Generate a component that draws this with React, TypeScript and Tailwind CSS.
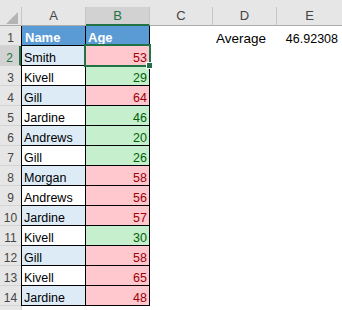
const rows: [string, number][] = [
  ["Smith", 53],
  ["Kivell", 29],
  ["Gill", 64],
  ["Jardine", 46],
  ["Andrews", 20],
  ["Gill", 26],
  ["Morgan", 58],
  ["Andrews", 56],
  ["Jardine", 57],
  ["Kivell", 30],
  ["Gill", 58],
  ["Kivell", 65],
  ["Jardine", 48],
];

const AVG = 46.92308;

export default function App() {
  return (
    <div className="w-[342px] h-[310px] overflow-hidden bg-white font-['Liberation_Sans',Arial,sans-serif] text-[12.5px] leading-[14px] text-black">
      <div className="relative">
        <div className="h-[7px] bg-[#e6e6e6]" />

        {/* column headers */}
        <div className="flex h-[19px] bg-[#e6e6e6] text-[13px] text-[#444]">
          <div className="relative w-[21px] h-full border-b border-[#ababab]">
            <svg className="absolute left-[6px] top-[5px]" width="12" height="12" viewBox="0 0 12 12">
              <path d="M12 0V12H0Z" fill="#b4b4b4" />
            </svg>
          </div>
          <div className="w-[65px] h-full flex items-center justify-center border-l border-r border-b border-[#c6c6c6] border-b-[#ababab]">A</div>
          <div className="w-[64px] h-full flex items-center justify-center bg-[#d2d2d2] border-r border-[#c6c6c6] border-b-2 border-b-[#217346] text-[#217346]">B</div>
          <div className="w-[63px] h-full flex items-center justify-center border-r border-b border-[#c6c6c6] border-b-[#ababab]">C</div>
          <div className="w-[64px] h-full flex items-center justify-center border-r border-b border-[#c6c6c6] border-b-[#ababab]">D</div>
          <div className="w-[65px] h-full flex items-center justify-center border-b border-[#ababab]">E</div>
        </div>

        {/* row 1 */}
        <div className="flex h-[20px]">
          <div className="w-[21px] flex items-end justify-center bg-[#e6e6e6] border-b border-[#d4d4d4] text-[12px] text-[#444]">1</div>
          <div className="w-[65px] flex items-end pl-[3px] bg-[#5b9bd5] border-l border-r border-b border-black font-bold text-white text-[13px]">Name</div>
          <div className="w-[64px] flex items-end pl-[2px] bg-[#5b9bd5] border-r border-b border-black font-bold text-white text-[13px]">Age</div>
          <div className="w-[63px]" />
          <div className="w-[64px] flex items-end pl-[3px] text-[13.5px]">Average</div>
          <div className="w-[65px] flex items-end justify-end pr-[4px]">46.92308</div>
        </div>

        {rows.map(([name, age], i) => {
          const r = i + 2;
          const high = age >= AVG;
          const sel = r === 2;
          return (
            <div key={r} className="flex h-[20px]">
              <div
                className={
                  sel
                    ? "w-[21px] flex items-end justify-center bg-[#d2d2d2] border-b border-r-2 border-[#d4d4d4] border-r-[#217346] text-[12px] text-[#217346]"
                    : "w-[21px] flex items-end justify-center bg-[#e6e6e6] border-b border-[#d4d4d4] text-[12px] text-[#444]"
                }
              >
                {r}
              </div>
              <div
                className={
                  r % 2 === 0
                    ? "w-[65px] flex items-end pl-[2px] bg-[#ddebf7] border-l border-r border-b border-black"
                    : "w-[65px] flex items-end pl-[2px] bg-white border-l border-r border-b border-black"
                }
              >
                {name}
              </div>
              <div
                className={
                  high
                    ? "w-[64px] flex items-end justify-end pr-[2px] bg-[#ffc7ce] text-[#9c0006] border-r border-b border-black"
                    : "w-[64px] flex items-end justify-end pr-[2px] bg-[#c6efce] text-[#006100] border-r border-b border-black"
                }
              >
                {age}
              </div>
              <div className="w-[63px]" />
              <div className="w-[64px]" />
              <div className="w-[65px]" />
            </div>
          );
        })}

        {/* row 15 (cut off) */}
        <div className="flex h-[20px]">
          <div className="w-[21px] bg-[#e6e6e6] border-b border-[#d4d4d4]" />
          <div className="w-[65px] border-l border-[#d4d4d4]" />
        </div>

        {/* active cell B2 */}
        <div className="absolute left-[84px] top-[44px] w-[67px] h-[23px] border-2 border-[#217346]" />
        <div className="absolute left-[146px] top-[62px] w-[7px] h-[7px] bg-[#217346] border border-white" />
      </div>
    </div>
  );
}
